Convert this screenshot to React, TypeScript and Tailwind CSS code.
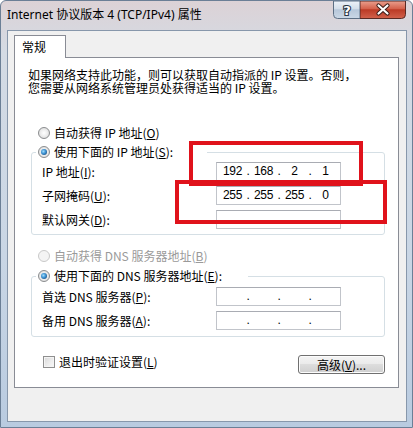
import React from "react";

function Radio({ checked = false, disabled = false }: { checked?: boolean; disabled?: boolean }) {
  return (
    <span
      className={`flex h-[12px] w-[12px] shrink-0 items-center justify-center rounded-full border ${
        disabled
          ? "border-[#c9c9c9] bg-[#f4f4f4]"
          : "border-[#8a8c8e] bg-[radial-gradient(circle_at_50%_50%,#ffffff_0%,#f0f0f0_40%,#d4d4d4_100%)]"
      }`}
    >
      {checked && (
        <span className="h-[6px] w-[6px] rounded-full bg-[radial-gradient(circle_at_40%_40%,#9fdcfb_0%,#3a8fd0_45%,#0b2f57_100%)]" />
      )}
    </span>
  );
}

function IpBox({ parts }: { parts?: string[] }) {
  const vals = parts ?? ["", "", "", ""];
  return (
    <div className="flex h-[19px] w-[125px] items-center border border-[#c1c4ca] border-t-[#a9acb3] bg-white pl-[2px] font-['Liberation_Sans',sans-serif] text-[12px] leading-[17px] tracking-[-0.4px] text-black">
      {vals.map((v, i) => (
        <React.Fragment key={i}>
          <span className="w-[27px] text-center">{v}</span>
          {i < 3 && <span className="w-[4px] text-center">.</span>}
        </React.Fragment>
      ))}
    </div>
  );
}

function Row({ label, parts }: { label: React.ReactNode; parts?: string[] }) {
  return (
    <div className="flex h-[19px] items-center">
      <span className="w-[174px] whitespace-nowrap leading-[19px]">{label}</span>
      <IpBox parts={parts} />
    </div>
  );
}

const u = (c: string) => (
  <>
    (<span className="underline underline-offset-[1px]">{c}</span>)
  </>
);

function HelpButton() {
  return (
    <svg width="27" height="18" viewBox="0 0 27 18" className="block">
      <defs>
        <linearGradient id="hb" x1="0" y1="0" x2="0" y2="1">
          <stop offset="0" stopColor="#eef3f9" />
          <stop offset="0.45" stopColor="#d3deea" />
          <stop offset="0.5" stopColor="#b7c7da" />
          <stop offset="1" stopColor="#cbd8e6" />
        </linearGradient>
      </defs>
      <path d="M0.5 0 V13.5 Q0.5 17.5 4.5 17.5 H27 V0 Z" fill="url(#hb)" stroke="#5d6f84" />
      <text x="14" y="13.5" textAnchor="middle" fontFamily="DejaVu Sans, sans-serif" fontSize="13" fontWeight="bold" fill="#ffffff" stroke="#2a3644" strokeWidth="2.2" paintOrder="stroke">
        ?
      </text>
    </svg>
  );
}

function CloseButton() {
  return (
    <svg width="46" height="18" viewBox="0 0 46 18" className="block">
      <defs>
        <linearGradient id="cb" x1="0" y1="0" x2="0" y2="1">
          <stop offset="0" stopColor="#eaa08f" />
          <stop offset="0.45" stopColor="#d4604a" />
          <stop offset="0.5" stopColor="#bb3a25" />
          <stop offset="1" stopColor="#d2624c" />
        </linearGradient>
      </defs>
      <path d="M0 0 V17.5 H41.5 Q45.5 17.5 45.5 13.5 V0 Z" fill="url(#cb)" stroke="#5a2a24" />
      <path d="M18.5 4.5 L27.5 12.5 M27.5 4.5 L18.5 12.5" stroke="#3b1c18" strokeWidth="4.2" strokeLinecap="round" />
      <path d="M18.5 4.5 L27.5 12.5 M27.5 4.5 L18.5 12.5" stroke="#ffffff" strokeWidth="2.2" strokeLinecap="round" />
    </svg>
  );
}

export default function App() {
  return (
    <div className="relative h-[428px] w-[413px] overflow-hidden bg-white font-['Noto_Sans_CJK_SC',sans-serif] text-[12px] text-black">
      {/* window frame */}
      <div className="flex h-full w-full flex-col rounded-t-[6px] border border-[#6b7f96] bg-[linear-gradient(180deg,#dcd2d6_0%,#d4dbe4_12%,#c9d6e5_60%,#b9cbe0_100%)] pb-[5px] pl-[6px] pr-[5px]">
        {/* title bar */}
        <div className="flex h-[29px] items-start justify-between">
          <span className="mt-[6px] whitespace-nowrap font-['Noto_Sans','Noto_Sans_CJK_SC',sans-serif] text-[12px] leading-[16px] text-black">
            Internet 协议版本 4 (TCP/IPv4) 属性
          </span>
          <div className="relative z-20 mr-px flex">
            <HelpButton />
            <CloseButton />
          </div>
        </div>

        {/* client area */}
        <div className="flex flex-1 flex-col border border-[#8797ab] bg-[#f0f0f0] pl-[6px] pr-[7px] pt-[4px]">
          {/* tab */}
          <div className="relative z-10 -mb-px flex h-[23px] w-[52px] items-center border border-b-0 border-[#898c95] bg-white pl-[7px] leading-[14px]">
            常规
          </div>
          {/* panel */}
          <div className="flex h-[331px] flex-col border border-[#898c95] bg-white">
            <div className="ml-[13px] mt-[10px] whitespace-nowrap leading-[13px]">
              <div>如果网络支持此功能，则可以获取自动指派的 IP 设置。否则，</div>
              <div>您需要从网络系统管理员处获得适当的 IP 设置。</div>
            </div>

            <div className="ml-[23px] mt-[31px] flex h-[16px] items-center gap-[4px] leading-[16px]">
              <Radio />
              <span>自动获得 IP 地址{u("O")}</span>
            </div>

            <fieldset className="ml-[16px] mt-[3px] w-[354px] rounded-[3px] border border-[#d5dfe5] px-0 pb-[5px] pt-[2px]">
              <legend className="ml-[4px] flex h-[16px] w-[171px] items-center gap-[4px] pl-[2px] leading-[16px]">
                <Radio checked />
                <span className="whitespace-nowrap">使用下面的 IP 地址{u("S")}:</span>
              </legend>
              <div className="flex flex-col gap-[5px] pl-[10px]">
                <Row label={<>IP 地址{u("I")}:</>} parts={["192", "168", "2", "1"]} />
                <Row label={<>子网掩码{u("U")}:</>} parts={["255", "255", "255", "0"]} />
                <Row label={<>默认网关{u("D")}:</>} />
              </div>
            </fieldset>

            <div className="ml-[23px] mt-[13px] flex h-[16px] items-center gap-[4px] leading-[16px] text-[#9a9a9a]">
              <Radio disabled />
              <span>自动获得 DNS 服务器地址{u("B")}</span>
            </div>

            <fieldset className="ml-[16px] mt-[4px] w-[354px] rounded-[3px] border border-[#d5dfe5] px-0 pb-[6px] pt-[3px]">
              <legend className="ml-[4px] flex h-[16px] w-[212px] items-center gap-[4px] pl-[2px] leading-[16px]">
                <Radio checked />
                <span className="whitespace-nowrap">使用下面的 DNS 服务器地址{u("E")}:</span>
              </legend>
              <div className="flex flex-col gap-[5px] pl-[10px]">
                <Row label={<>首选 DNS 服务器{u("P")}:</>} />
                <Row label={<>备用 DNS 服务器{u("A")}:</>} />
              </div>
            </fieldset>

            <div className="mt-[18px] flex items-start pl-[28px] pr-[13px]">
              <div className="flex h-[14px] items-center gap-[4px] leading-[14px]">
                <span className="h-[12px] w-[12px] border border-[#8f8f8f] bg-[linear-gradient(135deg,#d8d8d8_0%,#eeeeee_60%,#f8f8f8_100%)] shadow-[inset_0_0_0_1px_#f4f4f4]" />
                <span>退出时验证设置{u("L")}</span>
              </div>
              <div className="ml-auto flex h-[19px] w-[87px] items-center justify-center rounded-[3px] border border-[#707070] bg-[linear-gradient(180deg,#f4f4f4_0%,#ebebeb_45%,#dddddd_50%,#cfcfcf_100%)] leading-[14px] shadow-[inset_0_0_0_1px_#fcfcfc]">
                高级{u("V")}...
              </div>
            </div>
          </div>
        </div>
      </div>

      {/* red annotation boxes */}
      <div className="absolute left-[189px] top-[141px] h-[45px] w-[174px] border-[4px] border-[#e0121b]" />
      <div className="absolute left-[175px] top-[180px] h-[44px] w-[212px] border-[4px] border-[#e0121b]" />
    </div>
  );
}
